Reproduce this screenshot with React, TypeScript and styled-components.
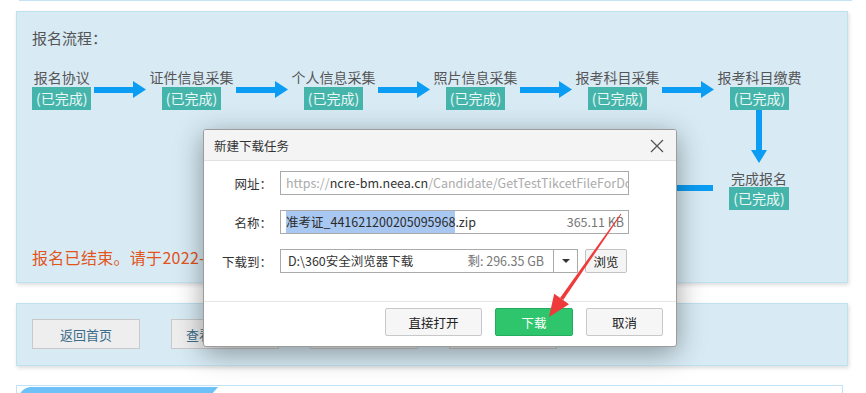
import React from "react";
import styled, { createGlobalStyle } from "styled-components";

const GlobalStyle = createGlobalStyle`
  html, body { margin: 0; padding: 0; background: #fff; overflow: hidden; }
  body { font-family: "Noto Sans CJK SC", "Microsoft YaHei", sans-serif; }
  * { box-sizing: border-box; }
`;

const Page = styled.div`
  position: relative;
  width: 866px;
  height: 393px;
  overflow: hidden;
  padding-left: 16px;
`;

const TopStrip = styled.div`
  margin-left: 3px;
  width: 833px;
  height: 1px;
  background: #c4e4f6;
`;

const Panel = styled.section`
  width: 832px;
  background: #d8ebf5;
  border: 1px solid #bfe2ef;
  box-shadow: 1px 2px 4px rgba(0, 0, 0, 0.14);
`;

const FlowPanel = styled(Panel)`
  margin-top: 10px;
  height: 272px;
  padding: 16px 15px 0;
`;

const PanelTitle = styled.div`
  font-size: 15px;
  line-height: 20px;
  color: #555;
`;

const FlowRow = styled.div`
  margin-top: 20px;
  display: flex;
  align-items: center;
  gap: 3px;
`;

const Step = styled.div`
  display: flex;
  flex-direction: column;
  align-items: center;
`;

const StepLabel = styled.div<{ $lh?: number }>`
  font-size: 14px;
  line-height: ${(p) => p.$lh ?? 19}px;
  color: #555;
  white-space: nowrap;
`;

const Badge = styled.div`
  height: 23px;
  padding: 0 4px;
  background: #45b5ac;
  color: #eaf7f5;
  font-size: 14px;
  line-height: 23px;
  white-space: nowrap;
`;

const FinishRow = styled.div`
  display: flex;
  align-items: flex-start;
  gap: 4px;
`;

const Connector = styled.div`
  margin-left: 468px;
  margin-top: 75px;
  width: 213px;
  height: 6px;
  background: #0b9cf4;
`;

const FinishStep = styled(Step)`
  width: 84px;
`;

const FinishLabel = styled(StepLabel)`
  margin-top: 7px;
`;

const Notice = styled.div`
  margin-top: 36px;
  font-size: 16px;
  line-height: 22px;
  letter-spacing: 0.3px;
  color: #e2541c;
  white-space: nowrap;
`;

const ActionPanel = styled(Panel)`
  margin-top: 20px;
  height: 63px;
  padding: 15px 15px 0;
  display: flex;
  gap: 31px;
`;

const ActionButton = styled.button`
  width: 108px;
  height: 30px;
  background: #eeeeee;
  border: 1px solid #c9c9c9;
  color: #3a6d8c;
  font-family: inherit;
  font-size: 13px;
  padding: 0;
`;

const ListPanel = styled.section`
  margin-top: 19px;
  width: 827px;
  height: 40px;
  border: 1px solid #c0e2f4;
  padding: 1px 2px;
`;

const Tab = styled.div`
  width: 199px;
  height: 30px;
  background: #6ec1f6;
  border-radius: 12px 0 0 0;
  clip-path: polygon(0 0, 100% 0, calc(100% - 7px) 8px, calc(100% - 9px) 100%, 0 100%);
`;

/* ---------- dialog ---------- */

const Dialog = styled.div`
  position: absolute;
  left: 203px;
  top: 129px;
  width: 474px;
  height: 218px;
  background: #fff;
  border: 1px solid #9c9c9c;
  border-radius: 3px;
  box-shadow: 0 6px 28px rgba(0, 0, 0, 0.38);
  z-index: 2;
  display: flex;
  flex-direction: column;
  overflow: hidden;
`;

const DialogHeader = styled.div`
  height: 31px;
  flex: none;
  background: #f4f4f4;
  border-bottom: 1px solid #e2e2e2;
  display: flex;
  align-items: center;
  justify-content: space-between;
  padding: 0 12px 0 10px;
`;

const DialogTitle = styled.div`
  font-size: 12.5px;
  color: #333;
`;

const CloseIcon = styled.svg`
  display: block;
  margin-top: 1px;
`;

const DialogBody = styled.div`
  padding: 10px 0 28px;
  display: flex;
  flex-direction: column;
  gap: 15px;
`;

const FormRow = styled.div`
  display: flex;
  align-items: center;
  height: 24px;
`;

const FormLabel = styled.div`
  flex: none;
  width: 68px;
  margin-right: 8px;
  text-align: right;
  font-size: 12.5px;
  color: #333;
  white-space: nowrap;
`;

const Field = styled.div<{ $width: number }>`
  flex: none;
  width: ${(p) => p.$width}px;
  height: 24px;
  border: 1px solid #aaaaaa;
  display: flex;
  align-items: center;
  padding: 0 4px 0 5px;
  font-size: 12.5px;
  line-height: 22px;
  color: #333;
  white-space: nowrap;
  overflow: hidden;
`;

const Muted = styled.span`
  color: #ababab;
`;

const Selected = styled.span`
  background: #a9c8f1;
  color: #2a2a2a;
`;

const SideInfo = styled.span`
  margin-left: auto;
  padding-left: 8px;
  color: #777;
`;

const PathField = styled(Field)`
  padding: 0;
`;

const PathText = styled.div`
  flex: 1;
  display: flex;
  align-items: center;
  padding: 0 9px 0 7px;
`;

const CaretBox = styled.div`
  width: 24px;
  height: 100%;
  border-left: 1px solid #aaaaaa;
  display: flex;
  align-items: center;
  justify-content: center;
`;

const Caret = styled.div`
  width: 0;
  height: 0;
  border-left: 4px solid transparent;
  border-right: 4px solid transparent;
  border-top: 4px solid #333;
`;

const BrowseButton = styled.button`
  flex: none;
  margin-left: 7px;
  width: 42px;
  height: 24px;
  background: #f4f4f4;
  border: 1px solid #c3c3c3;
  border-radius: 2px;
  font-family: inherit;
  font-size: 12.5px;
  color: #222;
  padding: 0;
`;

const DialogFooter = styled.div`
  border-top: 1px solid #e6e6e6;
  display: flex;
  justify-content: flex-end;
  gap: 13px;
  padding: 6px 13px 0;
`;

const FooterButton = styled.button<{ $width: number; $primary?: boolean }>`
  width: ${(p) => p.$width}px;
  height: 28px;
  border-radius: 2px;
  border: 1px solid ${(p) => (p.$primary ? "#24ad5e" : "#c8c8c8")};
  background: ${(p) => (p.$primary ? "#2ec56c" : "#f6f6f6")};
  color: ${(p) => (p.$primary ? "#fff" : "#222")};
  font-family: inherit;
  font-size: 12.5px;
  padding: 0;
`;

const Pointer = styled.svg`
  position: absolute;
  left: 0;
  top: 0;
  pointer-events: none;
  z-index: 3;
`;

const HArrow = () => (
  <svg width="52" height="17" viewBox="0 0 52 17" style={{ flex: "none" }}>
    <rect x="0" y="6" width="40" height="6" fill="#0b9cf4" />
    <polygon points="39,0 52,8.5 39,17" fill="#0b9cf4" />
  </svg>
);

const VArrow = () => (
  <svg width="16" height="53" viewBox="0 0 16 53">
    <rect x="5" y="0" width="6" height="41" fill="#0b9cf4" />
    <polygon points="0,40 16,40 8,53" fill="#0b9cf4" />
  </svg>
);

const steps = ["报名协议", "证件信息采集", "个人信息采集", "照片信息采集", "报考科目采集", "报考科目缴费"];

export default function App() {
  return (
    <>
      <GlobalStyle />
      <Page>
        <TopStrip />
        <FlowPanel>
          <PanelTitle>报名流程：</PanelTitle>
          <FlowRow>
            {steps.map((s, i) => (
              <React.Fragment key={s}>
                {i > 0 && <HArrow />}
                <Step>
                  <StepLabel>{s}</StepLabel>
                  <Badge>(已完成)</Badge>
                </Step>
              </React.Fragment>
            ))}
          </FlowRow>
          <FinishRow>
            <Connector />
            <FinishStep>
              <VArrow />
              <FinishLabel $lh={17}>完成报名</FinishLabel>
              <Badge>(已完成)</Badge>
            </FinishStep>
          </FinishRow>
          <Notice>报名已结束。请于2022-03-21后打印准考证。</Notice>
        </FlowPanel>
        <ActionPanel>
          <ActionButton>返回首页</ActionButton>
          <ActionButton>查看报名信息</ActionButton>
          <ActionButton>打印准考证</ActionButton>
          <ActionButton>退出登录</ActionButton>
        </ActionPanel>
        <ListPanel>
          <Tab />
        </ListPanel>

        <Dialog>
          <DialogHeader>
            <DialogTitle>新建下载任务</DialogTitle>
            <CloseIcon width="14" height="14" viewBox="0 0 14 14">
              <path d="M1 1 L13 13 M13 1 L1 13" stroke="#555" strokeWidth="1.3" fill="none" />
            </CloseIcon>
          </DialogHeader>
          <DialogBody>
            <FormRow>
              <FormLabel>网址：</FormLabel>
              <Field $width={349}>
                <Muted>https://</Muted>
                ncre-bm.neea.cn
                <Muted>/Candidate/GetTestTikcetFileForDownload</Muted>
              </Field>
            </FormRow>
            <FormRow>
              <FormLabel>名称：</FormLabel>
              <Field $width={349}>
                <Selected>准考证_441621200205095968</Selected>
                .zip
                <SideInfo>365.11 KB</SideInfo>
              </Field>
            </FormRow>
            <FormRow>
              <FormLabel>下载到：</FormLabel>
              <PathField $width={298}>
                <PathText>
                  D:\360安全浏览器下载
                  <SideInfo>剩: 296.35 GB</SideInfo>
                </PathText>
                <CaretBox>
                  <Caret />
                </CaretBox>
              </PathField>
              <BrowseButton>浏览</BrowseButton>
            </FormRow>
          </DialogBody>
          <DialogFooter>
            <FooterButton $width={97}>直接打开</FooterButton>
            <FooterButton $width={78} $primary>
              下载
            </FooterButton>
            <FooterButton $width={77}>取消</FooterButton>
          </DialogFooter>
        </Dialog>

        <Pointer width="866" height="393" viewBox="0 0 866 393">
          <polygon points="620.6,213.7 621.4,214.3 563.2,300.1 560,297.9" fill="#ee3a3a" />
          <polygon points="549,317 569,304.2 554.2,293.8" fill="#ee3a3a" />
        </Pointer>
      </Page>
    </>
  );
}
